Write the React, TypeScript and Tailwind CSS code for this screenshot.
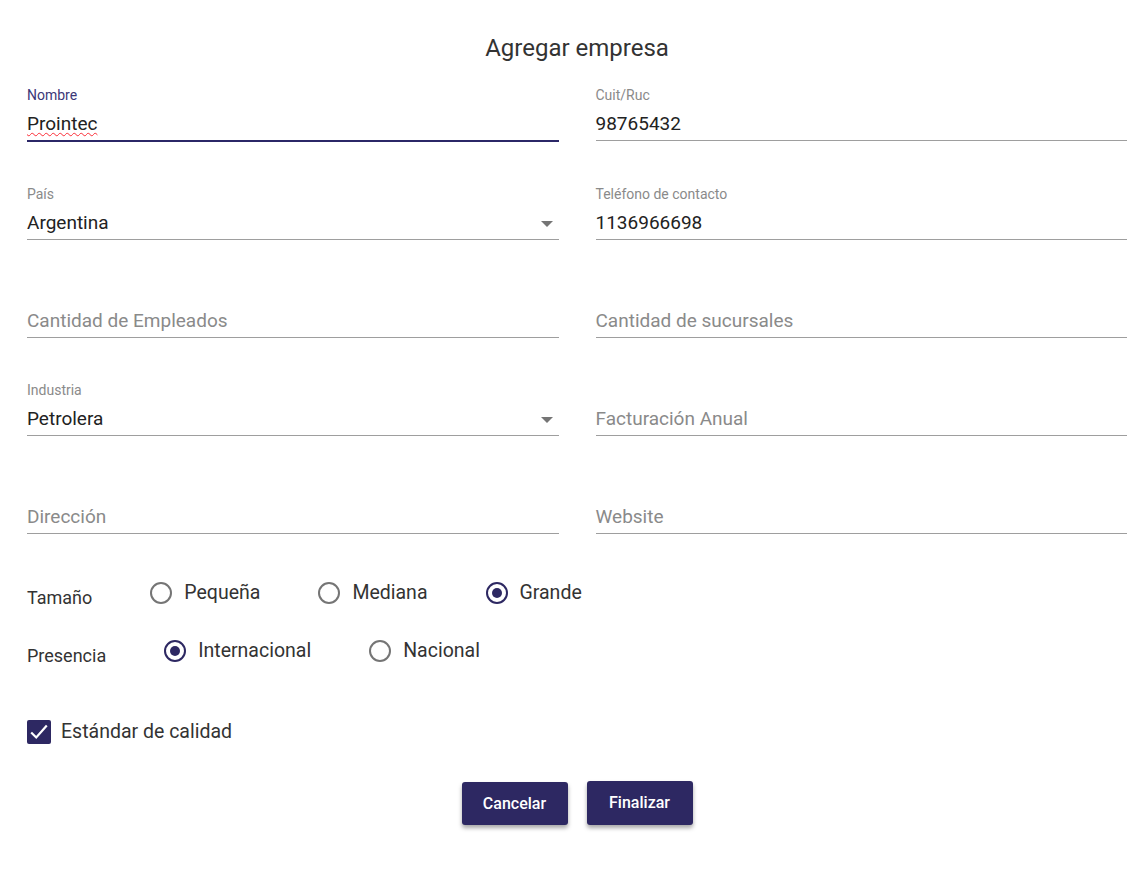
const navy = "#2d2862";

type FieldProps = {
  label?: string;
  value?: string;
  placeholder?: string;
  select?: boolean;
  focused?: boolean;
  spell?: boolean;
};

function Field({ label, value, placeholder, select, focused, spell }: FieldProps) {
  return (
    <div className="flex flex-col">
      <div
        className={`h-[16px] text-[14px] leading-[16px] ${focused ? "text-[#3b3777]" : "text-[#8a8a8a]"}`}
      >
        {label ?? ""}
      </div>
      <div
        className={`mt-[6px] flex h-[32px] items-center justify-between ${
          focused ? "border-b-2 border-[#2b2767] h-[33px]" : "border-b border-[#9e9e9e]"
        }`}
      >
        {value ? (
          <span
            className={`text-[19px] text-[#222] ${spell ? "underline decoration-wavy decoration-red-500 decoration-1 underline-offset-2" : ""}`}
          >
            {value}
          </span>
        ) : (
          <span className="text-[19px] text-[#8a8a8a]">{placeholder}</span>
        )}
        {select && (
          <svg width="12" height="6" viewBox="0 0 12 6" className="mr-[6px]">
            <path d="M0 0 L12 0 L6 6 Z" fill="#757575" />
          </svg>
        )}
      </div>
    </div>
  );
}

function Radio({ label, checked }: { label: string; checked?: boolean }) {
  return (
    <div className="flex items-center gap-[12px]">
      <span
        className={`flex h-[22px] w-[22px] items-center justify-center rounded-full border-2 ${
          checked ? "border-[#2d2862]" : "border-[#757575]"
        }`}
      >
        {checked && <span className="h-[10px] w-[10px] rounded-full bg-[#2d2862]" />}
      </span>
      <span className="text-[19.5px] text-[#333]">{label}</span>
    </div>
  );
}

export default function App() {
  return (
    <div
      className="min-h-[880px] bg-white pl-[27px] pr-[13px] pt-[32px]"
      style={{ fontFamily: "Roboto, 'Liberation Sans', sans-serif" }}
    >
      <h1 className="mb-[23px] h-[32px] text-center text-[24px] leading-[32px] text-[#333]">
        Agregar empresa
      </h1>
      <div className="grid grid-cols-2 gap-x-[37px] gap-y-[44px]">
        <Field label="Nombre" value="Prointec" focused spell />
        <Field label="Cuit/Ruc" value="98765432" />
        <Field label="País" value="Argentina" select />
        <Field label="Teléfono de contacto" value="1136966698" />
        <Field placeholder="Cantidad de Empleados" />
        <Field placeholder="Cantidad de sucursales" />
        <Field label="Industria" value="Petrolera" select />
        <Field placeholder="Facturación Anual" />
        <Field placeholder="Dirección" />
        <Field placeholder="Website" />
      </div>

      <div className="mt-[44px] flex h-[30px] items-center gap-[58px]">
        <span className="mt-[8px] text-[18px] text-[#333]">Tamaño</span>
        <Radio label="Pequeña" />
        <Radio label="Mediana" />
        <Radio label="Grande" checked />
      </div>
      <div className="mt-[28px] flex h-[30px] items-center gap-[58px]">
        <span className="mt-[8px] text-[18px] text-[#333]">Presencia</span>
        <Radio label="Internacional" checked />
        <Radio label="Nacional" />
      </div>

      <div className="mt-[54px] flex h-[24px] items-center gap-[10px]">
        <span className="flex h-[24px] w-[24px] items-center justify-center rounded-[2px] bg-[#2d2862]">
          <svg width="22" height="22" viewBox="0 0 24 24">
            <path d="M3.5 12.5 L9 18 L20.5 5" fill="none" stroke="white" strokeWidth="2.4" />
          </svg>
        </span>
        <span className="text-[19.5px] text-[#333]">Estándar de calidad</span>
      </div>

      <div className="mt-[38px] flex justify-center gap-[19px]">
        <button
          className="h-[43px] w-[106px] rounded-[3px] text-[16px] font-medium text-white shadow-[0_3px_4px_rgba(0,0,0,0.35)]"
          style={{ backgroundColor: navy }}
        >
          Cancelar
        </button>
        <button
          className="h-[44px] w-[106px] -translate-y-[1px] rounded-[3px] text-[16px] font-medium text-white shadow-[0_3px_4px_rgba(0,0,0,0.35)]"
          style={{ backgroundColor: navy }}
        >
          Finalizar
        </button>
      </div>
    </div>
  );
}
